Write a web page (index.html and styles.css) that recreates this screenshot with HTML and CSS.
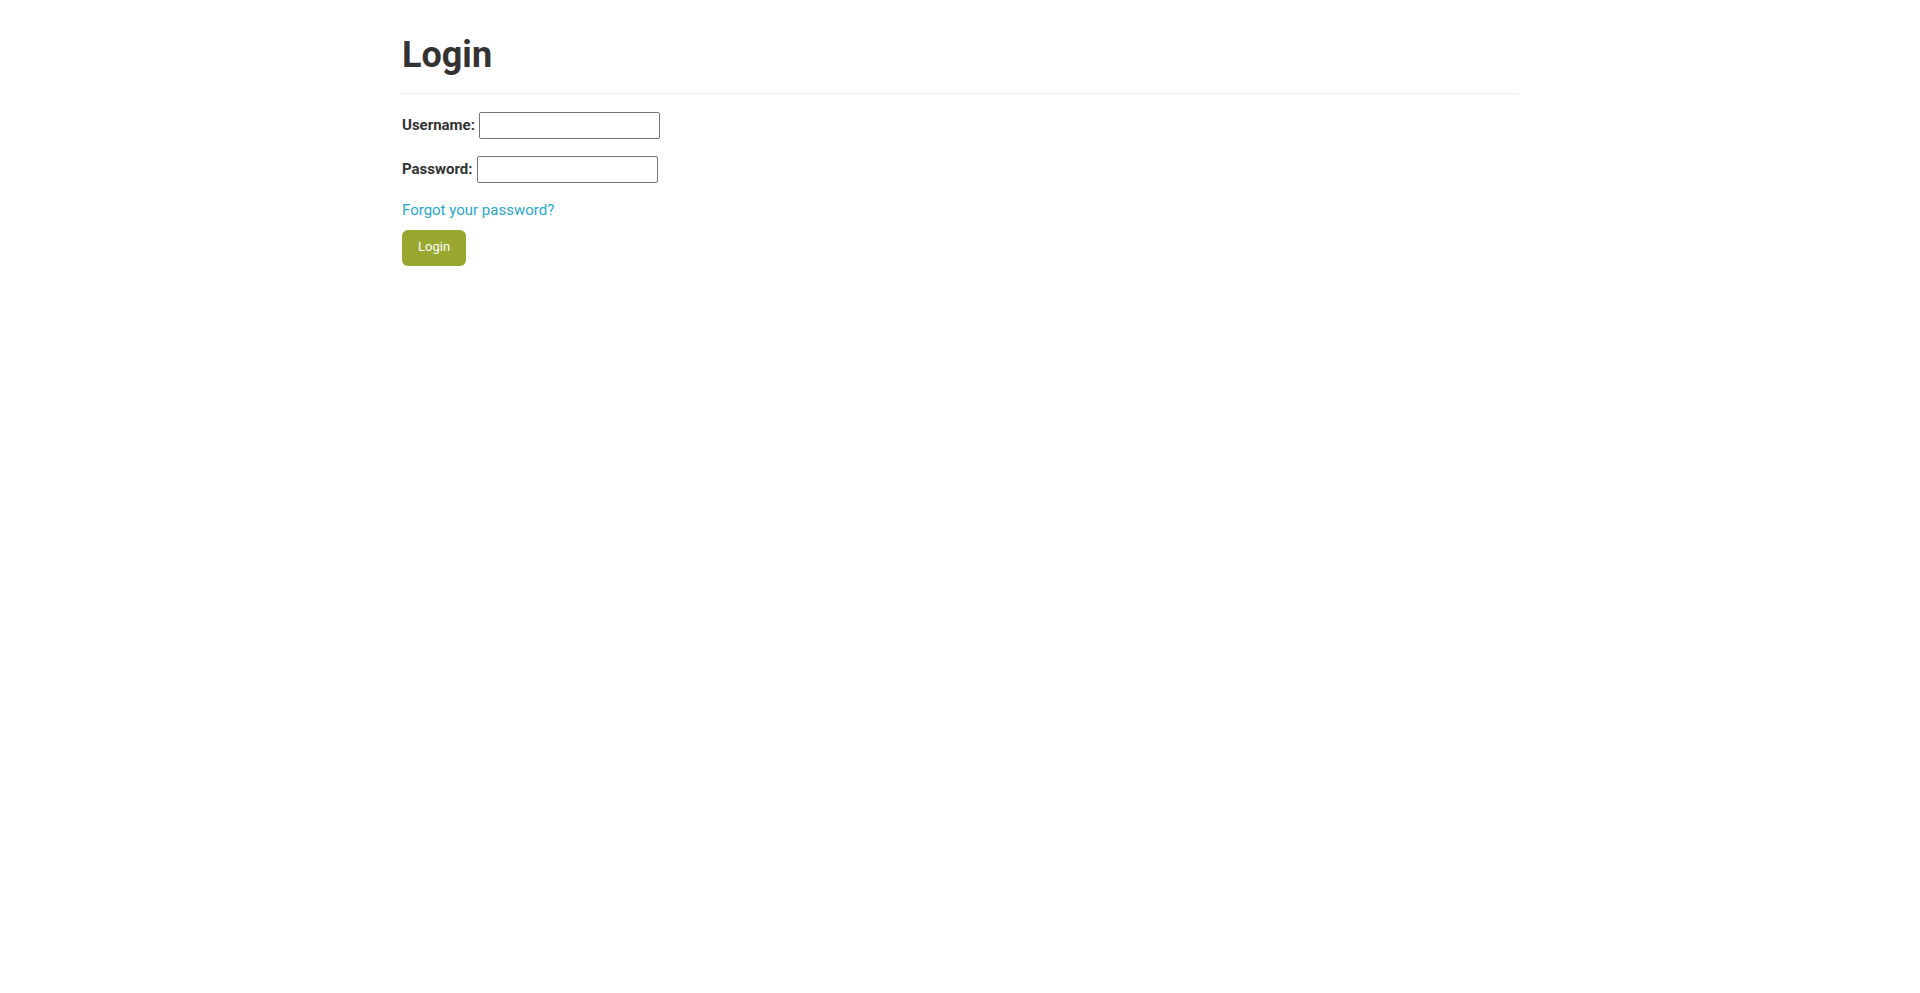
FILE: index.html
```html
<!DOCTYPE html>
<html lang="en">
<head>
  <meta charset="utf-8">
  <meta name="viewport" content="width=device-width, initial-scale=1.0">
  <title>Login</title>
  <link rel="stylesheet" href="styles.css">
</head>
<body>
  <div class="container">
    <div class="page-header">
      <h1>Login</h1>
    </div>
    <form class="login-form" action="#" method="post">
      <div class="form-row">
        <label for="username">Username:</label>
        <input type="text" id="username" name="username">
      </div>
      <div class="form-row">
        <label for="password">Password:</label>
        <input type="password" id="password" name="password">
      </div>
      <p class="forgot"><a href="#">Forgot your password?</a></p>
      <button type="submit" class="login-button">Login</button>
    </form>
  </div>
</body>
</html>
```

FILE: styles.css
```css
body {
  font-family: Roboto, "Liberation Sans", Arial, sans-serif;
  margin: 0;
  padding: 0;
  background-color: #fff;
  color: #333;
}

.container {
  max-width: 1116px;
  margin: 0 auto;
}

.page-header {
  padding-top: 34px;
  padding-bottom: 16px;
  border-bottom: 1px solid #eeeeee;
}

h1 {
  margin: 0;
  font-size: 36px;
  line-height: 1.2;
  font-weight: 700;
  color: #333;
}

.login-form {
  padding-top: 18px;
}

.form-row {
  display: flex;
  align-items: center;
  gap: 4px;
  margin-bottom: 17px;
}

.form-row label {
  font-size: 15px;
  font-weight: 700;
  color: #333;
  padding-bottom: 1px;
}

.form-row input {
  width: 181px;
  height: 27px;
  box-sizing: border-box;
  border: 1px solid #767676;
  border-radius: 2px;
  padding: 2px 4px;
  font-size: 14px;
  font-family: inherit;
}

.forgot {
  margin: 18px 0 0;
  font-size: 15px;
}

.forgot a {
  color: #2ba6cb;
  text-decoration: none;
}

.login-button {
  margin-top: 11px;
  padding: 8px 16px 10px;
  font-family: inherit;
  font-size: 13px;
  line-height: 18px;
  color: #fff;
  background-color: #98a830;
  border: none;
  border-radius: 6px;
  cursor: pointer;
}

.login-button:hover {
  background-color: #889726;
}
```
